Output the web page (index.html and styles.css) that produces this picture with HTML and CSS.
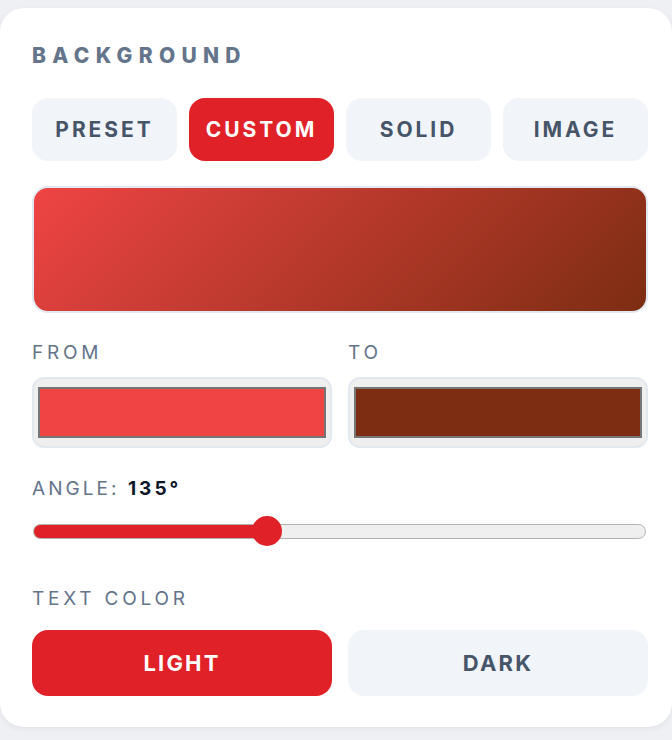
FILE: index.html
```html
<!DOCTYPE html>
<html lang="en">
<head>
    <meta charset="UTF-8">
    <meta name="viewport" content="width=device-width, initial-scale=1.0">
    <title>Background Settings</title>
    <link rel="stylesheet" href="styles.css">
</head>
<body>
    <div class="panel">
        <div class="section-title">Background</div>

        <div class="tabs">
            <button class="tab">Preset</button>
            <button class="tab active">Custom</button>
            <button class="tab">Solid</button>
            <button class="tab">Image</button>
        </div>

        <div class="preview"></div>

        <div class="color-row">
            <label class="field">
                <span class="field-label">From</span>
                <input type="color" value="#ef4444">
            </label>
            <label class="field">
                <span class="field-label">To</span>
                <input type="color" value="#7c2d12">
            </label>
        </div>

        <div class="field-label angle-label">Angle: <strong>135°</strong></div>
        <input type="range" class="angle" min="0" max="360" value="135" style="--fill: 0.375">

        <div class="field-label text-label">Text color</div>
        <div class="toggle">
            <button class="toggle-btn active">Light</button>
            <button class="toggle-btn">Dark</button>
        </div>
    </div>
</body>
</html>
```

FILE: styles.css
```css
:root {
    --red: #e02128;
    --muted: #64748b;
    --slate: #475569;
    --soft: #f1f4f9;
    --line: #e2e8f0;
}

* {
    margin: 0;
    padding: 0;
    box-sizing: border-box;
    font-family: Inter, 'Noto Sans', sans-serif;
}

body {
    background: #eef0f4;
    padding-top: 8px;
    min-height: 100vh;
}

.panel {
    width: 672px;
    background: #fff;
    border-radius: 24px;
    padding: 36px 24px 31px 32px;
    box-shadow: 0 2px 6px rgba(15, 23, 42, 0.06);
}

.section-title {
    font-size: 21px;
    line-height: 24px;
    font-weight: 800;
    letter-spacing: 0.3em;
    text-transform: uppercase;
    color: var(--muted);
}

.tabs {
    display: grid;
    grid-template-columns: repeat(4, 1fr);
    gap: 12px;
    margin-top: 30px;
}

button {
    border: none;
    outline: none;
    cursor: pointer;
    font-weight: 700;
    text-transform: uppercase;
}

.tab {
    height: 63px;
    border-radius: 16px;
    background: var(--soft);
    color: var(--slate);
    font-size: 21px;
    letter-spacing: 0.14em;
}

.tab.active,
.toggle-btn.active {
    background: var(--red);
    color: #fff;
}

.preview {
    height: 127px;
    margin-top: 25px;
    border: 2px solid var(--line);
    border-radius: 16px;
    background: linear-gradient(135deg, #ef4444, #7c2d12);
}

.color-row {
    display: grid;
    grid-template-columns: 1fr 1fr;
    gap: 16px;
    margin-top: 29px;
}

.field {
    display: flex;
    flex-direction: column;
    gap: 13px;
}

.field-label {
    display: block;
    font-size: 19px;
    line-height: 22px;
    letter-spacing: 0.2em;
    text-transform: uppercase;
    color: var(--muted);
}

.field-label strong {
    color: #0f172a;
    font-weight: 700;
}

input[type="color"] {
    -webkit-appearance: none;
    appearance: none;
    width: 100%;
    height: 71px;
    padding: 8px 4px;
    border: 2px solid var(--line);
    border-radius: 12px;
    background: #efefef;
    cursor: pointer;
}

input[type="color"]::-webkit-color-swatch-wrapper {
    padding: 0;
}

input[type="color"]::-webkit-color-swatch {
    border: 2px solid #767676;
    border-radius: 0;
}

.angle-label {
    margin-top: 30px;
    letter-spacing: 0.16em;
}

.angle {
    -webkit-appearance: none;
    appearance: none;
    display: block;
    width: 613px;
    height: 30px;
    margin: 16px 0 0 1px;
    background: transparent;
    cursor: pointer;
}

.angle::-webkit-slider-runnable-track {
    height: 15px;
    border: 1px solid #b2b2b2;
    border-radius: 8px;
    background: linear-gradient(to right,
        var(--red) calc(15px + (100% - 30px) * var(--fill)),
        #efefef calc(15px + (100% - 30px) * var(--fill)));
}

.angle::-webkit-slider-thumb {
    -webkit-appearance: none;
    width: 30px;
    height: 30px;
    margin-top: -8.5px;
    border-radius: 50%;
    background: var(--red);
}

.text-label {
    margin-top: 42px;
}

.toggle {
    display: grid;
    grid-template-columns: 1fr 1fr;
    gap: 16px;
    margin-top: 20px;
}

.toggle-btn {
    height: 66px;
    border-radius: 16px;
    background: var(--soft);
    color: var(--slate);
    font-size: 22px;
    letter-spacing: 0.1em;
}
```
